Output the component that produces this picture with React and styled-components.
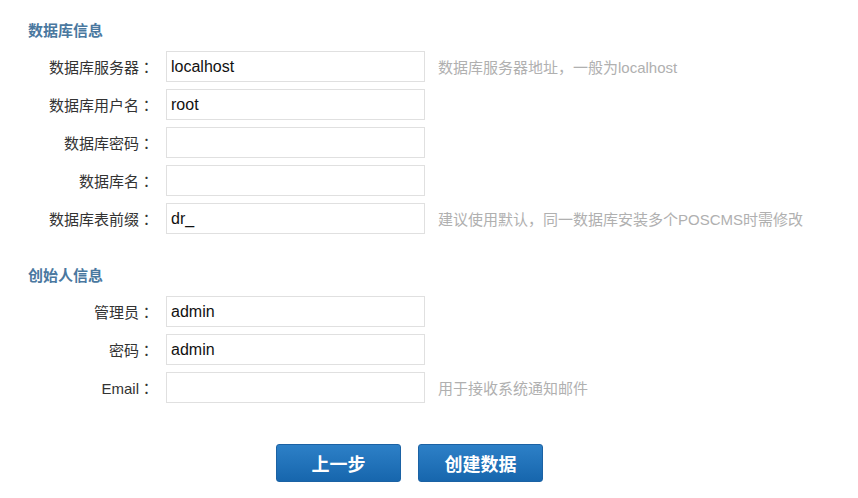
import React from "react";
import styled, { createGlobalStyle } from "styled-components";

const GlobalStyle = createGlobalStyle`
  body {
    margin: 0;
    background: #fff;
    font-family: "Liberation Sans", "Noto Sans CJK SC", sans-serif;
  }
`;

const dbFields = [
  { label: "数据库服务器", value: "localhost", hint: "数据库服务器地址，一般为localhost" },
  { label: "数据库用户名", value: "root" },
  { label: "数据库密码", value: "" },
  { label: "数据库名", value: "" },
  { label: "数据库表前缀", value: "dr_", hint: "建议使用默认，同一数据库安装多个POSCMS时需修改" },
];

const adminFields = [
  { label: "管理员", value: "admin" },
  { label: "密码", value: "admin" },
  { label: "Email", value: "", hint: "用于接收系统通知邮件" },
];

const FieldRow = ({ label, value, hint }) => (
  <Row>
    <Label>
      {label}
      <Colon>：</Colon>
    </Label>
    <Input defaultValue={value} />
    {hint && <Hint>{hint}</Hint>}
  </Row>
);

const App = () => {
  return (
    <>
      <GlobalStyle />
      <Wrapper>
        <Section>
          <Title>数据库信息</Title>
          <Rows>
            {dbFields.map((f) => (
              <FieldRow key={f.label} {...f} />
            ))}
          </Rows>
        </Section>
        <Section second>
          <Title>创始人信息</Title>
          <Rows>
            {adminFields.map((f) => (
              <FieldRow key={f.label} {...f} />
            ))}
          </Rows>
        </Section>
        <Buttons>
          <Button>上一步</Button>
          <Button>创建数据</Button>
        </Buttons>
      </Wrapper>
    </>
  );
};

const Wrapper = styled.div`
  padding: 21px 0 0 28px;
`;
const Section = styled.div`
  margin-top: ${(p) => (p.second ? "32px" : "0")};
`;
const Title = styled.div`
  height: 20px;
  line-height: 20px;
  font-size: 15px;
  font-weight: bold;
  color: #4a789f;
  margin-bottom: 10px;
`;
const Rows = styled.div`
  display: flex;
  flex-direction: column;
  gap: 7px;
`;
const Row = styled.div`
  display: flex;
  align-items: center;
  height: 31px;
`;
const Label = styled.div`
  width: 126px;
  margin-right: 12px;
  text-align: right;
  font-size: 15px;
  color: #333;
  white-space: nowrap;
`;
const Colon = styled.span`
  font-family: "Noto Sans CJK TC", sans-serif;
`;
const Input = styled.input`
  box-sizing: border-box;
  width: 259px;
  height: 31px;
  border: 1px solid #e0e0e0;
  padding: 0 4px;
  font-family: "Liberation Sans", "Noto Sans CJK SC", sans-serif;
  font-size: 16px;
  color: #111;
  outline: none;
`;
const Hint = styled.div`
  margin-left: 13px;
  font-size: 15px;
  color: #b0b0b0;
`;
const Buttons = styled.div`
  display: flex;
  gap: 17px;
  margin-top: 41px;
  padding-left: 248px;
`;
const Button = styled.button`
  width: 125px;
  height: 38px;
  border: 1px solid #1b62a4;
  border-radius: 3px;
  background: linear-gradient(#2d80c7, #1766ad);
  color: #fff;
  font-family: "Liberation Sans", "Noto Sans CJK SC", sans-serif;
  font-size: 18px;
  font-weight: bold;
  cursor: pointer;
`;

export default App;
